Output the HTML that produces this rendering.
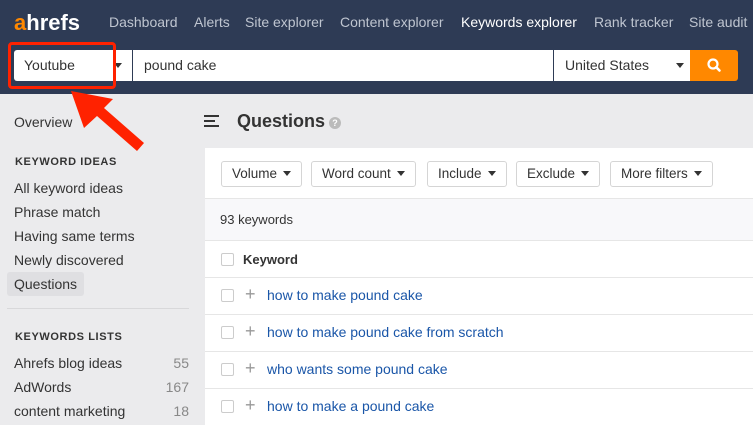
<!DOCTYPE html>
<html><head><style>
*{margin:0;padding:0;box-sizing:border-box}
body{width:753px;height:425px;overflow:hidden;background:#ebebed;font-family:"Liberation Sans",sans-serif;position:relative}
.hdr{position:absolute;left:0;top:0;width:753px;height:94px;background:#2e3b55}
.logo{position:absolute;left:14px;top:10px;font-size:22px;font-weight:bold;color:#fff;letter-spacing:0px}
.logo b{color:#ff8800}
.nav{position:absolute;top:14px;font-size:14px;color:#bfc5d0}
.inp{position:absolute;top:50px;height:31px;background:#fff;font-size:14px;color:#333;line-height:31px}
.sb{position:absolute;left:14px;font-size:14px;color:#333}
.sh{position:absolute;left:15px;font-size:11px;font-weight:bold;color:#333;letter-spacing:.6px}
.cnt{position:absolute;right:0;color:#888}
.panel{position:absolute;left:205px;top:148px;width:548px;height:277px;background:#fff}
.btn{position:absolute;top:13px;height:26px;border:1px solid #d5d5d5;border-radius:3px;font-size:13.5px;color:#333;line-height:24px;padding:0 10px;white-space:nowrap}
.btn i{display:inline-block;margin-left:6px;vertical-align:2px;border:4px solid transparent;border-top:5px solid #333;border-bottom:0}
.cb{position:absolute;left:16px;width:13px;height:13px;border:1px solid #ccc;border-radius:2px}
.row{position:absolute;left:0;width:548px;border-top:1px solid #e6e6e6}
.kw{position:absolute;left:62px;font-size:14px;color:#1a56a8}
.plus{position:absolute;left:40px;font-size:18px;color:#999;font-weight:300}
</style></head><body>
<div class="hdr">
<div class="logo"><b>a</b>hrefs</div>
<div class="nav" style="left:109px">Dashboard</div>
<div class="nav" style="left:194px">Alerts</div>
<div class="nav" style="left:245px">Site explorer</div>
<div class="nav" style="left:340px">Content explorer</div>
<div class="nav" style="left:461px;color:#fff">Keywords explorer</div>
<div class="nav" style="left:594px">Rank tracker</div>
<div class="nav" style="left:689px">Site audit</div>
<div class="inp" style="left:14px;width:118px;border-radius:3px 0 0 3px;padding-left:10px">Youtube<span style="position:absolute;left:100px;top:13px;border:4px solid transparent;border-top:5px solid #333"></span></div>
<div class="inp" style="left:133px;width:420px;padding-left:11px">pound cake</div>
<div class="inp" style="left:554px;width:136px;padding-left:11px">United States<span style="position:absolute;left:122px;top:13px;border:4px solid transparent;border-top:5px solid #333"></span></div>
<div class="inp" style="left:690px;width:48px;background:#ff8800;border-radius:0 3px 3px 0">
<svg width="48" height="31" viewBox="0 0 48 31"><circle cx="23" cy="14" r="4.5" fill="none" stroke="#fff" stroke-width="2.2"/><line x1="26.2" y1="17.2" x2="29.5" y2="20.5" stroke="#fff" stroke-width="2.6" stroke-linecap="round"/></svg></div>
</div>
<div style="position:absolute;left:8px;top:42px;width:108px;height:47px;border:3px solid #ff2200;border-radius:4px"></div>
<div class="sb" style="top:114px">Overview</div>
<div class="sh" style="top:156px">KEYWORD IDEAS</div>
<div class="sb" style="top:180px">All keyword ideas</div>
<div class="sb" style="top:204px">Phrase match</div>
<div class="sb" style="top:228px">Having same terms</div>
<div class="sb" style="top:252px">Newly discovered</div>
<div style="position:absolute;left:7px;top:272px;width:77px;height:24px;background:#dfdfe2;border-radius:3px"></div>
<div class="sb" style="top:276px">Questions</div>
<div style="position:absolute;left:7px;top:308px;width:182px;height:1px;background:#d8d8da"></div>
<div class="sh" style="top:331px">KEYWORDS LISTS</div>
<div class="sb" style="top:355px;width:175px">Ahrefs blog ideas<span class="cnt">55</span></div>
<div class="sb" style="top:379px;width:175px">AdWords<span class="cnt">167</span></div>
<div class="sb" style="top:403px;width:175px">content marketing<span class="cnt">18</span></div>
<svg style="position:absolute;left:204px;top:114px" width="16" height="14"><rect x="0" y="1" width="15" height="2" fill="#333"/><rect x="0" y="6" width="11" height="2" fill="#333"/><rect x="0" y="11" width="15" height="2" fill="#333"/></svg>
<div style="position:absolute;left:237px;top:111px;font-size:18px;font-weight:bold;color:#333">Questions</div>
<div style="position:absolute;left:329px;top:117px;width:12px;height:12px;border-radius:50%;background:#bbb;color:#fff;font-size:9px;font-weight:bold;text-align:center;line-height:12px">?</div>
<div class="panel">
<div class="btn" style="left:16px">Volume<i></i></div>
<div class="btn" style="left:106px">Word count<i></i></div>
<div class="btn" style="left:222px">Include<i></i></div>
<div class="btn" style="left:311px">Exclude<i></i></div>
<div class="btn" style="left:405px">More filters<i></i></div>
<div class="row" style="top:50px;height:42px;background:#f8f8fa"><span style="position:absolute;left:15px;top:13px;font-size:13px;color:#333">93 keywords</span></div>
<div class="row" style="top:92px;height:37px"><span class="cb" style="top:12px"></span><span style="position:absolute;left:38px;top:11px;font-size:13px;font-weight:bold;color:#333">Keyword</span></div>
<div class="row" style="top:129px;height:37px"><span class="cb" style="top:11px"></span><span class="plus" style="top:6px">+</span><span class="kw" style="top:9px">how to make pound cake</span></div>
<div class="row" style="top:166px;height:37px"><span class="cb" style="top:11px"></span><span class="plus" style="top:6px">+</span><span class="kw" style="top:9px">how to make pound cake from scratch</span></div>
<div class="row" style="top:203px;height:37px"><span class="cb" style="top:11px"></span><span class="plus" style="top:6px">+</span><span class="kw" style="top:9px">who wants some pound cake</span></div>
<div class="row" style="top:240px;height:37px"><span class="cb" style="top:11px"></span><span class="plus" style="top:6px">+</span><span class="kw" style="top:9px">how to make a pound cake</span></div>
</div>
<svg style="position:absolute;left:0;top:0" width="753" height="425"><polygon points="71,91 113,99 104,108 144,143 137,151 97,116 84,128" fill="#ff2200"/></svg>
</body></html>
